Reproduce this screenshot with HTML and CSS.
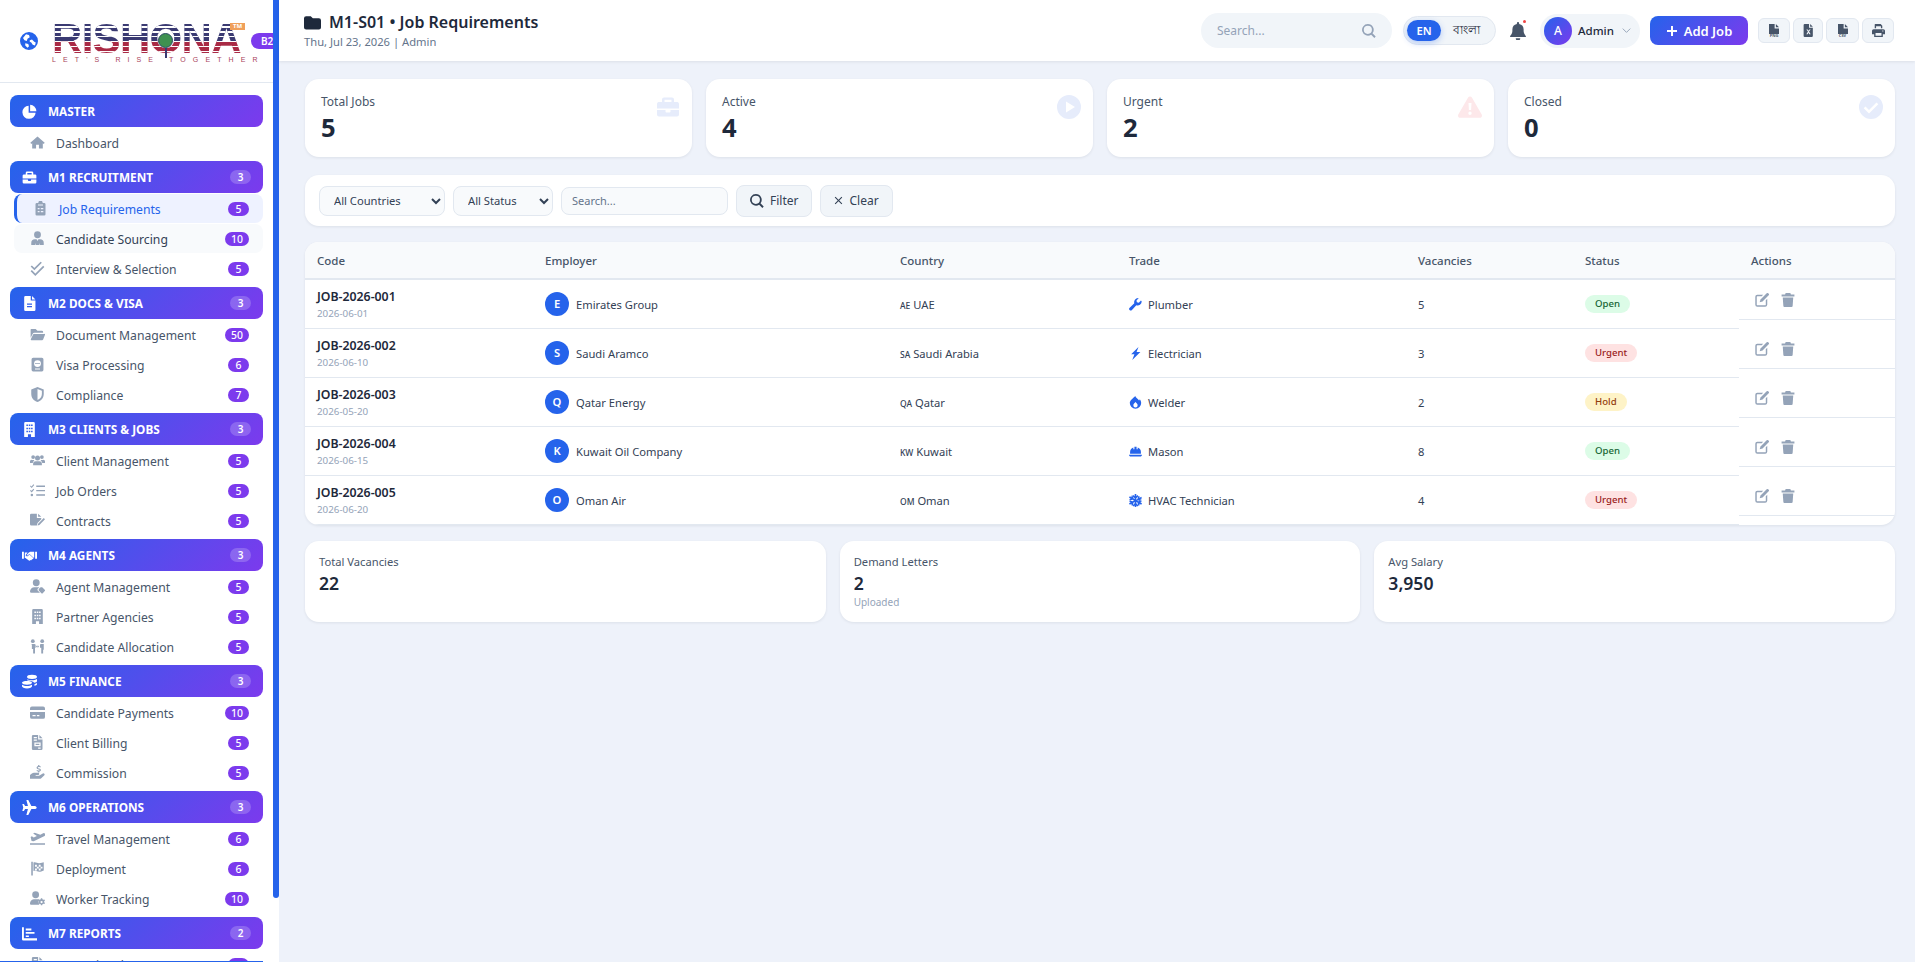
FILE: index.html
```html
<!DOCTYPE html>
<html lang="en">
<head>
    <meta charset="UTF-8">
    <meta name="viewport" content="width=device-width, initial-scale=1.0">
    <title>Job Requirements</title>
    <link rel="stylesheet" href="styles.css">
</head>
<body>
    <svg class="sprite" xmlns="http://www.w3.org/2000/svg">
        <symbol id="i-globe" viewBox="0 0 24 24"><path d="M12 0a12 12 0 1 0 0 24 12 12 0 0 0 0-24zM4 8l4-5 4 1 1 3-3 2-1 3-3-1zm9 3l3-1 3 3 2 1-1 4-3-1-2-3-2-1zM7 15l4 1 1 3-2 2-3-3z"/></symbol>
        <symbol id="i-pie" viewBox="0 0 24 24"><path d="M10.6 2.6v11.3h11.2A10.6 10.6 0 1 1 10.6 2.6z"/><path d="M13 1a10.6 10.6 0 0 1 10 10.4H13z"/></symbol>
        <symbol id="i-home" viewBox="0 0 24 24"><path d="M12 2.5L0.5 12.5l1.5 1.7L3.5 13v8.5h6.2v-6h4.6v6h6.2V13l1.5 1.2 1.5-1.7z"/></symbol>
        <symbol id="i-brief" viewBox="0 0 24 24"><path d="M8 2.5h8a2 2 0 0 1 2 2V7h3.500a2 2 0 0 1 1.500 2v4.500H1V9a2 2 0 0 1 1.500-2H6V4.500a2 2 0 0 1 2-2zm.5 2.200V7h7V4.700z"/><path d="M1 15h8.500v1.500a1 1 0 0 0 1 1h3a1 1 0 0 0 1-1V15H23v4.500a2 2 0 0 1-2 2H3a2 2 0 0 1-2-2z"/></symbol>
        <symbol id="i-clip" viewBox="0 0 24 24"><path d="M6 3h2.500a3.500 3.500 0 0 1 7 0H18a2 2 0 0 1 2 2v16a2 2 0 0 1-2 2H6a2 2 0 0 1-2-2V5a2 2 0 0 1 2-2zm1.500 8v2h3v-2zm5 0v2h4v-2zm-5 5v2h3v-2zm5 0v2h4v-2zM8 5.500v1.500h8V5.500z"/></symbol>
        <symbol id="i-tie" viewBox="0 0 24 24"><circle cx="12" cy="6" r="5.500"/><path d="M10.500 13l1.500 3 1.500-3h2.500a6 6 0 0 1 6 6v3.500H16V19l-1 3.500H9L8 19v3.500H2V19a6 6 0 0 1 6-6z"/></symbol>
        <symbol id="i-checks" viewBox="0 0 24 24"><path d="M2 8l5 5L18 2" fill="none" stroke="currentColor" stroke-width="2.800"/><path d="M2 15.500l6.500 6.500L22 8.500" fill="none" stroke="currentColor" stroke-width="2.800"/></symbol>
        <symbol id="i-doc" viewBox="0 0 24 24"><path d="M5.500 0H14v7h7.500v15a2 2 0 0 1-2 2h-14a2 2 0 0 1-2-2V2a2 2 0 0 1 2-2zM16 0l5.500 5.500H16zM8 12v2h8v-2zm0 4v2h8v-2z"/></symbol>
        <symbol id="i-folder-open" viewBox="0 0 24 24"><path d="M2 3h7l3 3h7a2 2 0 0 1 2 2v1H7a3 3 0 0 0-2.800 2L1 17V4a1 1 0 0 1 1-1z"/><path d="M7 11h16a1 1 0 0 1 1 1.300L21 20a2 2 0 0 1-2 1H2a1 1 0 0 1-.8-1.300L5 12a2 2 0 0 1 2-1z"/></symbol>
        <symbol id="i-passport" viewBox="0 0 24 24"><path d="M5 1h14a2.500 2.500 0 0 1 2.500 2.500v17A2.500 2.500 0 0 1 19 23H5a2.500 2.500 0 0 1-2.500-2.500v-17A2.500 2.500 0 0 1 5 1zm7 4a5.500 5.500 0 1 0 0 11 5.500 5.500 0 0 0 0-11zM8 18.500V20h8v-1.500zM8 10h8v1H8z"/></symbol>
        <symbol id="i-shield" viewBox="0 0 24 24"><path d="M12 0l10 4v7c0 6-4 11-10 13C6 22 2 17 2 11V4zm0 3.200V20.800c4-1.800 7-5.300 7-9.800V6z"/></symbol>
        <symbol id="i-building" viewBox="0 0 24 24"><path d="M5.500 0h13a2 2 0 0 1 2 2v22h-6v-4.500h-5V24h-6V2a2 2 0 0 1 2-2zM7 4v2.500h2.500V4zm3.800 0v2.500h2.500V4zm3.700 0v2.500H17V4zM7 9v2.500h2.500V9zm3.800 0v2.500h2.500V9zm3.700 0v2.500H17V9zM7 14v2.500h2.500V14zm3.800 0v2.500h2.500V14zm3.700 0v2.500H17V14z"/></symbol>
        <symbol id="i-users" viewBox="0 0 24 24"><circle cx="5" cy="6.500" r="3"/><circle cx="19" cy="6.500" r="3"/><circle cx="12" cy="8" r="4"/><path d="M0 15a3 3 0 0 1 3-4h3l1 1c-1.500 1-2.500 2.500-2.500 4H0zM24 15a3 3 0 0 0-3-4h-3l-1 1c1.500 1 2.500 2.500 2.500 4H24zM9 13h6a4 4 0 0 1 4 4v2.500H5V17a4 4 0 0 1 4-4z"/></symbol>
        <symbol id="i-listcheck" viewBox="0 0 24 24"><path d="M10 4h14v2.200H10zM10 11h14v2.200H10zM10 18h14v2.200H10zM1 4l1.500 1.500L5.500 2l1.300 1.200L2.700 8 0 5.200zM1 11l1.500 1.500 3-3.500 1.300 1.200L2.700 15 0 12.200z"/><circle cx="3" cy="19" r="2"/></symbol>
        <symbol id="i-sign" viewBox="0 0 24 24"><path d="M2 1h9v7h7v2l-6 6-1 4H2a2 2 0 0 1-2-2V3a2 2 0 0 1 2-2zM13 1l5 5h-5z"/><path d="M22 8l2 2-9 9-3 1 1-3z"/></symbol>
        <symbol id="i-hands" viewBox="0 0 24 24"><path d="M0 6h3v11H0zM21 6h3v11h-3zM4.500 7H9l-3 4a2 2 0 0 0 3 2l3-2.500 6.500 6-1.500 1.500-1 .1-1 1.400-1.300-.2-1.200 1.200-1.500-.7L5.500 16H4.500z"/><path d="M10.500 7.500L13 6h6.500v9l-1 .5L12 9.500 8 12.500 7.500 11z"/></symbol>
        <symbol id="i-usertag" viewBox="0 0 24 24"><circle cx="10" cy="6" r="5.500"/><path d="M7 13h6a7 7 0 0 1 2 .3L12 16v2l4 4H2a2 2 0 0 1-2-2A7 7 0 0 1 7 13z"/><path d="M14 16l3-3h2.500l4.500 4.500a1 1 0 0 1 0 1.400L20 23a1 1 0 0 1-1.400 0L14 18.500z"/></symbol>
        <symbol id="i-arrows" viewBox="0 0 24 24"><circle cx="4.500" cy="3.500" r="3"/><circle cx="19.500" cy="3.500" r="3"/><path d="M2 8h5a2 2 0 0 1 2 2v4H8v9H5v-7H3v-7zM17 8h5v9h-1v6h-3v-9h-2v-4a2 2 0 0 1 1-2z"/><path d="M9.500 12l2-2v1.500h1V10l2 2-2 2v-1.500h-1V14z"/></symbol>
        <symbol id="i-coins" viewBox="0 0 24 24"><ellipse cx="16" cy="4.500" rx="8" ry="3.500"/><path d="M8.500 8.500c1.500 1 4.500 1.500 7.500 1.500s6-.5 8-2v3c0 1.500-2 2.500-4.500 3C18 12 14 10.500 8.500 10.500z"/><path d="M20 16c2-.5 4-1.500 4-2.500v3c0 1-2 2-4 2.500zM0 14c0-2 3.500-3 8-3s8 1 8 3-3.500 3-8 3-8-1-8-3zM0 17c2 1.500 5 2 8 2s6-.5 8-2v2.500C16 21.500 12.500 23 8 23s-8-1.500-8-3.500z"/></symbol>
        <symbol id="i-card" viewBox="0 0 24 24"><path d="M3 2.500h18a3 3 0 0 1 3 3V8H0V5.500a3 3 0 0 1 3-3zM0 11h24v8a3 3 0 0 1-3 3H3a3 3 0 0 1-3-3zm4 5v2h5v-2zm7 0v2h4v-2z"/></symbol>
        <symbol id="i-invoice" viewBox="0 0 24 24"><path d="M5 0h8v7h7v15a2 2 0 0 1-2 2H5a2 2 0 0 1-2-2V2a2 2 0 0 1 2-2zM15 0l5 5h-5zM6 3v2h5V3zm0 4v2h5V7zm1 5v6h10v-6zm2 2h6v2H9zM13 20v2h4v-2z"/></symbol>
        <symbol id="i-handdollar" viewBox="0 0 24 24"><path d="M13 0h2v1.500c1 .2 2 .6 2.500 1.200L16.300 4c-1-.8-3.800-1-3.800.3 0 1.500 5 .7 5 3.700 0 1.400-1 2.200-2.500 2.500V12h-2v-1.500c-1.200-.2-2.200-.7-2.800-1.400L11.500 8c1.200 1 4 1.300 4 0 0-1.500-5-.7-5-3.700 0-1.400 1-2.400 2.500-2.800z"/><path d="M0 16l3-2.500c1.500-1 3-1.300 4.500-1H13a1.800 1.800 0 0 1 0 3.600H9v1h5.500l6-3.600a2 2 0 0 1 2.500 3l-5 4.500a4 4 0 0 1-2.500 1H0z"/></symbol>
        <symbol id="i-plane" viewBox="0 0 24 24"><path d="M23.500 12c0 1.500-2 2.500-4 2.500h-4.500L10 24H7l2.500-9.500H5L3 17.500H0.500L2 12 0.500 6.500H3L5 9.500h4.500L7 0h3l5 9.500h4.500c2 0 4 1 4 2.500z"/></symbol>
        <symbol id="i-depart" viewBox="0 0 24 24"><path d="M0 19.500h24V22H0zM1 9.500l2-1 3 2 5-2.500-6-4 2.500-1.300 9 3.200 4.500-2.400a2.500 2.500 0 0 1 2.300 4.400L6 16.500 2.500 16z"/></symbol>
        <symbol id="i-flag" viewBox="0 0 24 24"><path d="M2 1h2.500v22H2zM5.500 2.500C9 1 12 4 15 3.500s5-1 7-1.500v13c-3 1.500-5 2-7.500 2s-5.500-2.500-9-1zM8 6v3h3V6zm6 0v3h3V6zM11 9v3h3V9zm6 0v3h3V9zM8 12v3h3v-3zm6 0v3h3v-3z"/></symbol>
        <symbol id="i-usercog" viewBox="0 0 24 24"><circle cx="9" cy="6" r="5.500"/><path d="M6 13h6c1 0 2 .2 2.800.6-1.500 2.400-1.500 5.400 0 8.400H1.500A1.500 1.500 0 0 1 0 20.500 7.500 7.500 0 0 1 6 13z"/><path d="M18.500 11.500h2l.4 1.700 1.400.8 1.700-.5 1 1.700-1.300 1.200v1.600l1.300 1.200-1 1.700-1.700-.5-1.400.8-.4 1.700h-2l-.4-1.700-1.400-.8-1.700.5-1-1.700 1.300-1.200v-1.600l-1.300-1.200 1-1.700 1.700.5 1.400-.8zm1 4.300a1.800 1.800 0 1 0 0 3.600 1.800 1.800 0 0 0 0-3.600z" transform="translate(-1 0)"/></symbol>
        <symbol id="i-chart" viewBox="0 0 24 24"><path d="M0 2h3v17.500h21V23H2a2 2 0 0 1-2-2zM6 4h9v3H6zM6 9.500h14v3H6zM6 15h5v2.500H6z"/></symbol>
        <symbol id="i-folder" viewBox="0 0 24 24"><path d="M3 3h6.500l3 3H21a3 3 0 0 1 3 3v10a3 3 0 0 1-3 3H3a3 3 0 0 1-3-3V6a3 3 0 0 1 3-3z"/></symbol>
        <symbol id="i-search" viewBox="0 0 24 24"><path d="M10 0a10 10 0 0 1 8 16l5.500 5.500-2.300 2.300L15.700 18.300A10 10 0 1 1 10 0zm0 3a7 7 0 1 0 0 14 7 7 0 0 0 0-14z"/></symbol>
        <symbol id="i-bell" viewBox="0 0 24 24"><path d="M10.500 1.500a1.500 1.500 0 0 1 3 0v1.200A7.500 7.500 0 0 1 19.500 10v2c0 2.500 1 4.500 3 6.500v1.500h-21v-1.500c2-2 3-4 3-6.500v-2a7.500 7.500 0 0 1 6-7.300zM9 21.500h6a3 3 0 0 1-6 0z"/></symbol>
        <symbol id="i-chevron" viewBox="0 0 24 24"><path d="M2 7l10 10L22 7" fill="none" stroke="currentColor" stroke-width="2.500"/></symbol>
        <symbol id="i-plus" viewBox="0 0 24 24"><path d="M10 2h4v8h8v4h-8v8h-4v-8H2v-4h8z"/></symbol>
        <symbol id="i-file" viewBox="4 0 16 16"><path d="M4 0h9v7h7v9H4zM15 0l5 5h-5z"/></symbol>
        <symbol id="i-filex" viewBox="0 0 24 24"><path d="M5 0h8v7h7v15a2 2 0 0 1-2 2H5a2 2 0 0 1-2-2V2a2 2 0 0 1 2-2zM15 0l5 5h-5zM8 10l3 4-3 5h2.500l1.500-3 1.500 3H16l-3-5 3-4h-2.500L12 12.500 10.500 10z"/></symbol>
        <symbol id="i-print" viewBox="0 0 24 24"><path d="M6 0h10l3 3v5h-2.500V4H7.500v4H5V1a1 1 0 0 1 1-1zM3 9.500h18a3 3 0 0 1 3 3V19h-4v5H4v-5H0v-6.500a3 3 0 0 1 3-3zM6.500 16.500v5h11v-5zM19 12v2h2v-2z"/></symbol>
        <symbol id="i-xmark" viewBox="0 0 24 24"><path d="M4 2l8 8 8-8 2 2-8 8 8 8-2 2-8-8-8 8-2-2 8-8-8-8z"/></symbol>
        <symbol id="i-play" viewBox="0 0 24 24"><path d="M12 0a12 12 0 1 1 0 24 12 12 0 0 1 0-24zM9 6.500v11L18 12z"/></symbol>
        <symbol id="i-warn" viewBox="0 0 24 24"><path d="M12 1.500c.8 0 1.500.4 1.900 1.100l9.800 17c.8 1.400-.2 3.100-1.800 3.100H2.100C.5 22.700-.5 21 .3 19.600l9.800-17c.4-.7 1.100-1.100 1.900-1.100zM10.500 8l.4 7h2.200l.4-7zM12 16.500a1.700 1.700 0 1 0 0 3.400 1.700 1.700 0 0 0 0-3.400z"/></symbol>
        <symbol id="i-check" viewBox="0 0 24 24"><path d="M12 0a12 12 0 1 1 0 24 12 12 0 0 1 0-24zm5.500 7.500L10 15l-3.500-3.500-1.800 1.800L10 18.500l9.300-9.300z"/></symbol>
        <symbol id="i-wrench" viewBox="0 0 24 24"><path d="M23.500 6.500a7.500 7.500 0 0 1-10 7L5 22.500a3 3 0 0 1-4.200-4.200l9-8.500a7.500 7.500 0 0 1 7-9.600l1 .2-4 4 .7 3.600 3.600.7 4-4z"/></symbol>
        <symbol id="i-bolt" viewBox="0 0 24 24"><path d="M17.500 0L4 13.500h6L6 24l15-15h-7L17.500 0z"/></symbol>
        <symbol id="i-fire" viewBox="0 0 24 24"><path d="M11.500 0c1 3 5 5 7 8.500.8-.8 1.200-1.500 1.500-2.500 1.800 2 2.500 5 2.500 7a10.500 10.500 0 0 1-21 0C1.500 8 7 5 11.500 0zm.5 11c-1.500 2-4 3-4 6a4 4 0 0 0 8 0c0-2.500-2.500-4-4-6z"/></symbol>
        <symbol id="i-helmet" viewBox="0 0 24 24"><path d="M10 3h4v5h2V4.500A9 9 0 0 1 22 13v3H2v-3a9 9 0 0 1 6-8.500V8h2zM0 18h24a3 3 0 0 1-2 3H2a3 3 0 0 1-2-3z"/></symbol>
        <symbol id="i-snow" viewBox="0 0 24 24"><path d="M10.500 0h3v4l2-2 2 2-4 4v2.400l2.100-1.200 1.400-5.400 2.800.7-.7 2.700 3.400-2 1.500 2.600-3.400 2 2.700.7-.7 2.800-5.400-1.500L14.900 12l2.300 1.300 5.400-1.500.7 2.800-2.700.7 3.400 2-1.500 2.600-3.400-2 .7 2.700-2.800.7-1.400-5.400-2.100-1.200V17l4 4-2 2-2-2v3h-3v-3l-2 2-2-2 4-4v-2.300l-2.100 1.200-1.400 5.400-2.800-.7.7-2.700-3.400 2-1.500-2.600 3.400-2-2.700-.7.7-2.800 5.400 1.500L9.100 12 6.800 10.700 1.400 12.200.7 9.400l2.700-.7-3.400-2 1.500-2.600 3.400 2-.7-2.700 2.800-.7 1.400 5.400 2.100 1.200V8l-4-4 2-2 2 2z"/></symbol>
        <symbol id="i-edit" viewBox="0 0 24 24"><path d="M4 3h10l-2.500 2.500H4a1 1 0 0 0-1 1V20a1 1 0 0 0 1 1h13.500a1 1 0 0 0 1-1v-7.500L21 10v10a4 4 0 0 1-3.500 3.500H4A3.500 3.500 0 0 1 .5 20V6.500A3.500 3.500 0 0 1 4 3z"/><path d="M20 .6a2 2 0 0 1 2.800 0l.6.6a2 2 0 0 1 0 2.800L13 14.500l-5 1.500 1.500-5z"/></symbol>
        <symbol id="i-trash" viewBox="0 0 24 24"><path d="M8 0h8l1 2.500h6V6H1V2.500h6zM3 7.500h18L20 22a2 2 0 0 1-2 2H6a2 2 0 0 1-2-2z"/></symbol>
    </svg>

    <div class="sidebar">
        <div class="sidebar-inner">
            <div class="brand">
                <svg class="ic brand-globe"><use href="#i-globe"/></svg>
                <div class="logo">
                    <div class="logo-name">RISHONA</div>
                    <div class="logo-tag">LET'S RISE TOGETHER</div>
                    <span class="logo-mark"><i></i></span>
                    <span class="logo-tm">TM</span>
                </div>
                <span class="brand-pill">B2</span>
            </div>

            <div class="nav">
                <div class="nav-head"><svg class="ic"><use href="#i-pie"/></svg>MASTER</div>
                <a class="nav-item"><svg class="ic"><use href="#i-home"/></svg>Dashboard</a>

                <div class="nav-head"><svg class="ic"><use href="#i-brief"/></svg>M1 RECRUITMENT<span class="head-count">3</span></div>
                <a class="nav-item active"><svg class="ic"><use href="#i-clip"/></svg>Job Requirements<span class="count">5</span></a>
                <a class="nav-item hover"><svg class="ic"><use href="#i-tie"/></svg>Candidate Sourcing<span class="count">10</span></a>
                <a class="nav-item"><svg class="ic"><use href="#i-checks"/></svg>Interview &amp; Selection<span class="count">5</span></a>

                <div class="nav-head"><svg class="ic"><use href="#i-doc"/></svg>M2 DOCS &amp; VISA<span class="head-count">3</span></div>
                <a class="nav-item"><svg class="ic"><use href="#i-folder-open"/></svg>Document Management<span class="count">50</span></a>
                <a class="nav-item"><svg class="ic"><use href="#i-passport"/></svg>Visa Processing<span class="count">6</span></a>
                <a class="nav-item"><svg class="ic"><use href="#i-shield"/></svg>Compliance<span class="count">7</span></a>

                <div class="nav-head"><svg class="ic"><use href="#i-building"/></svg>M3 CLIENTS &amp; JOBS<span class="head-count">3</span></div>
                <a class="nav-item"><svg class="ic"><use href="#i-users"/></svg>Client Management<span class="count">5</span></a>
                <a class="nav-item"><svg class="ic"><use href="#i-listcheck"/></svg>Job Orders<span class="count">5</span></a>
                <a class="nav-item"><svg class="ic"><use href="#i-sign"/></svg>Contracts<span class="count">5</span></a>

                <div class="nav-head"><svg class="ic"><use href="#i-hands"/></svg>M4 AGENTS<span class="head-count">3</span></div>
                <a class="nav-item"><svg class="ic"><use href="#i-usertag"/></svg>Agent Management<span class="count">5</span></a>
                <a class="nav-item"><svg class="ic"><use href="#i-building"/></svg>Partner Agencies<span class="count">5</span></a>
                <a class="nav-item"><svg class="ic"><use href="#i-arrows"/></svg>Candidate Allocation<span class="count">5</span></a>

                <div class="nav-head"><svg class="ic"><use href="#i-coins"/></svg>M5 FINANCE<span class="head-count">3</span></div>
                <a class="nav-item"><svg class="ic"><use href="#i-card"/></svg>Candidate Payments<span class="count">10</span></a>
                <a class="nav-item"><svg class="ic"><use href="#i-invoice"/></svg>Client Billing<span class="count">5</span></a>
                <a class="nav-item"><svg class="ic"><use href="#i-handdollar"/></svg>Commission<span class="count">5</span></a>

                <div class="nav-head"><svg class="ic"><use href="#i-plane"/></svg>M6 OPERATIONS<span class="head-count">3</span></div>
                <a class="nav-item"><svg class="ic"><use href="#i-depart"/></svg>Travel Management<span class="count">6</span></a>
                <a class="nav-item"><svg class="ic"><use href="#i-flag"/></svg>Deployment<span class="count">6</span></a>
                <a class="nav-item"><svg class="ic"><use href="#i-usercog"/></svg>Worker Tracking<span class="count">10</span></a>

                <div class="nav-head"><svg class="ic"><use href="#i-chart"/></svg>M7 REPORTS<span class="head-count">2</span></div>
                <a class="nav-item"><svg class="ic"><use href="#i-invoice"/></svg>Operational Reports<span class="count">5</span></a>
            </div>
            <div class="hbar"></div>
        </div>
        <div class="vbar"><div class="vbar-thumb"></div></div>
    </div>

    <div class="main">
        <div class="topbar">
            <div class="page-title">
                <h1><svg class="ic"><use href="#i-folder"/></svg>M1-S01 • Job Requirements</h1>
                <p>Thu, Jul 23, 2026 | Admin</p>
            </div>
            <div class="top-search">
                <span>Search...</span>
                <svg class="ic"><use href="#i-search"/></svg>
            </div>
            <div class="lang">
                <span class="lang-on">EN</span>
                <span class="lang-off">বাংলা</span>
            </div>
            <div class="bell"><svg class="ic"><use href="#i-bell"/></svg><i></i></div>
            <div class="user">
                <span class="user-avatar">A</span>
                <span>Admin</span>
                <svg class="ic"><use href="#i-chevron"/></svg>
            </div>
            <button class="add-job"><svg class="ic"><use href="#i-plus"/></svg>Add Job</button>
            <div class="exports">
                <button class="w-png"><span class="ftype"><svg class="ic"><use href="#i-file"/></svg><b>PNG</b></span></button>
                <button class="w-xls"><svg class="ic"><use href="#i-filex"/></svg></button>
                <button class="w-csv"><span class="ftype"><svg class="ic"><use href="#i-file"/></svg><b>CSV</b></span></button>
                <button class="w-prn"><svg class="ic"><use href="#i-print"/></svg></button>
            </div>
        </div>

        <div class="content">
            <div class="stats">
                <div class="stat">
                    <div class="stat-label">Total Jobs</div>
                    <div class="stat-value">5</div>
                    <svg class="ic stat-icon blue"><use href="#i-brief"/></svg>
                </div>
                <div class="stat">
                    <div class="stat-label">Active</div>
                    <div class="stat-value">4</div>
                    <svg class="ic stat-icon blue"><use href="#i-play"/></svg>
                </div>
                <div class="stat">
                    <div class="stat-label">Urgent</div>
                    <div class="stat-value">2</div>
                    <svg class="ic stat-icon red"><use href="#i-warn"/></svg>
                </div>
                <div class="stat">
                    <div class="stat-label">Closed</div>
                    <div class="stat-value">0</div>
                    <svg class="ic stat-icon blue"><use href="#i-check"/></svg>
                </div>
            </div>

            <div class="filters">
                <select class="sel-country"><option>All Countries</option></select>
                <select class="sel-status"><option>All Status</option></select>
                <input type="text" placeholder="Search...">
                <button><svg class="ic"><use href="#i-search"/></svg>Filter</button>
                <button><svg class="ic small"><use href="#i-xmark"/></svg>Clear</button>
            </div>

            <div class="table-card">
                <table>
                    <colgroup>
                        <col class="c-code"><col class="c-emp"><col class="c-country"><col class="c-trade"><col class="c-vac"><col class="c-status"><col class="c-act">
                    </colgroup>
                    <thead>
                        <tr><th>Code</th><th>Employer</th><th>Country</th><th>Trade</th><th>Vacancies</th><th>Status</th><th>Actions</th></tr>
                    </thead>
                    <tbody>
                        <tr>
                            <td class="code-cell"><div class="code">JOB-2026-001</div><div class="date">2026-06-01</div></td>
                            <td><div class="emp"><span class="emp-av">E</span>Emirates Group</div></td>
                            <td><span class="cc">AE</span> UAE</td>
                            <td><div class="trade"><svg class="ic"><use href="#i-wrench"/></svg>Plumber</div></td>
                            <td>5</td>
                            <td><span class="pill open">Open</span></td>
                            <td class="actions"><button><svg class="ic"><use href="#i-edit"/></svg></button><button><svg class="ic"><use href="#i-trash"/></svg></button></td>
                        </tr>
                        <tr>
                            <td class="code-cell"><div class="code">JOB-2026-002</div><div class="date">2026-06-10</div></td>
                            <td><div class="emp"><span class="emp-av">S</span>Saudi Aramco</div></td>
                            <td><span class="cc">SA</span> Saudi Arabia</td>
                            <td><div class="trade"><svg class="ic"><use href="#i-bolt"/></svg>Electrician</div></td>
                            <td>3</td>
                            <td><span class="pill urgent">Urgent</span></td>
                            <td class="actions"><button><svg class="ic"><use href="#i-edit"/></svg></button><button><svg class="ic"><use href="#i-trash"/></svg></button></td>
                        </tr>
                        <tr>
                            <td class="code-cell"><div class="code">JOB-2026-003</div><div class="date">2026-05-20</div></td>
                            <td><div class="emp"><span class="emp-av">Q</span>Qatar Energy</div></td>
                            <td><span class="cc">QA</span> Qatar</td>
                            <td><div class="trade"><svg class="ic"><use href="#i-fire"/></svg>Welder</div></td>
                            <td>2</td>
                            <td><span class="pill hold">Hold</span></td>
                            <td class="actions"><button><svg class="ic"><use href="#i-edit"/></svg></button><button><svg class="ic"><use href="#i-trash"/></svg></button></td>
                        </tr>
                        <tr>
                            <td class="code-cell"><div class="code">JOB-2026-004</div><div class="date">2026-06-15</div></td>
                            <td><div class="emp"><span class="emp-av">K</span>Kuwait Oil Company</div></td>
                            <td><span class="cc">KW</span> Kuwait</td>
                            <td><div class="trade"><svg class="ic"><use href="#i-helmet"/></svg>Mason</div></td>
                            <td>8</td>
                            <td><span class="pill open">Open</span></td>
                            <td class="actions"><button><svg class="ic"><use href="#i-edit"/></svg></button><button><svg class="ic"><use href="#i-trash"/></svg></button></td>
                        </tr>
                        <tr>
                            <td class="code-cell"><div class="code">JOB-2026-005</div><div class="date">2026-06-20</div></td>
                            <td><div class="emp"><span class="emp-av">O</span>Oman Air</div></td>
                            <td><span class="cc">OM</span> Oman</td>
                            <td><div class="trade"><svg class="ic"><use href="#i-snow"/></svg>HVAC Technician</div></td>
                            <td>4</td>
                            <td><span class="pill urgent">Urgent</span></td>
                            <td class="actions"><button><svg class="ic"><use href="#i-edit"/></svg></button><button><svg class="ic"><use href="#i-trash"/></svg></button></td>
                        </tr>
                    </tbody>
                </table>
            </div>

            <div class="summary">
                <div class="sum-card">
                    <div class="sum-label">Total Vacancies</div>
                    <div class="sum-value">22</div>
                </div>
                <div class="sum-card">
                    <div class="sum-label">Demand Letters</div>
                    <div class="sum-value">2</div>
                    <div class="sum-note">Uploaded</div>
                </div>
                <div class="sum-card">
                    <div class="sum-label">Avg Salary</div>
                    <div class="sum-value">3,950</div>
                </div>
            </div>
        </div>
    </div>
</body>
</html>
```

FILE: styles.css
```css
* {
    box-sizing: border-box;
}

body {
    margin: 0;
    height: 100vh;
    overflow: hidden;
    display: flex;
    font-family: "Noto Sans", sans-serif;
    font-size: 12px;
    color: #334155;
    background: #eef2fa;
}

.sprite {
    display: none;
}

.ic {
    display: block;
    flex: none;
    width: 14px;
    height: 14px;
    fill: currentColor;
    fill-rule: evenodd;
}

/* sidebar */
.sidebar {
    display: flex;
    flex: none;
    width: 279px;
    height: 100vh;
    background: #fff;
}

.sidebar-inner {
    position: relative;
    width: 273px;
    overflow: hidden;
}

.vbar {
    width: 6px;
}

.vbar-thumb {
    height: 898px;
    background: #2563eb;
    border-radius: 0 0 3px 3px;
}

.hbar {
    position: absolute;
    left: 0;
    bottom: 0;
    width: 263px;
    height: 1px;
    background: #2563eb;
}

.brand {
    display: flex;
    align-items: center;
    height: 83px;
    padding-left: 20px;
    border-bottom: 1px solid #e2e8f0;
}

.brand-globe {
    width: 18px;
    height: 18px;
    color: #2563eb;
    margin-right: 14px;
}

.logo {
    position: relative;
    width: 190px;
    height: 41px;
    margin-top: 4px;
}

.logo-name {
    font-family: "Liberation Sans", Arial, sans-serif;
    font-size: 42px;
    font-weight: 700;
    line-height: 32px;
    height: 31px;
    letter-spacing: -0.7px;
    color: transparent;
    background: repeating-linear-gradient(transparent 0 3.5px, #fff 3.5px 4.8px), linear-gradient(#3a3a72 58%, #a92a45 58%);
    -webkit-background-clip: text;
    background-clip: text;
}

.logo-tag {
    font-family: "Liberation Sans", Arial, sans-serif;
    font-size: 7px;
    line-height: 8px;
    margin-top: 2px;
    letter-spacing: 7.1px;
    white-space: nowrap;
    color: #a9425a;
}

.logo-mark {
    position: absolute;
    left: 106px;
    top: 10px;
    width: 15px;
    height: 15px;
    border-radius: 50%;
    background: #3f9150;
    border: 1px solid #2c4a63;
}

.logo-mark i {
    position: absolute;
    left: 6px;
    top: 14px;
    width: 2px;
    height: 10px;
    background: #3a3a72;
}

.logo-tm {
    position: absolute;
    left: 178px;
    top: 0;
    width: 15px;
    height: 7px;
    font-size: 6px;
    line-height: 7px;
    font-weight: 700;
    text-align: center;
    color: #fff;
    background: #f0a05a;
}

.brand-pill {
    flex: none;
    width: 34px;
    height: 16px;
    margin-left: 9px;
    padding-left: 10px;
    border-radius: 8px;
    background: #7c3aed;
    color: #fff;
    font-size: 10px;
    font-weight: 600;
    line-height: 16px;
}

.nav {
    padding: 12px 10px 0;
}

.nav-head {
    display: flex;
    align-items: center;
    height: 32px;
    margin: 0 0 1px;
    padding: 0 12px;
    border-radius: 8px;
    background: linear-gradient(135deg, #2563eb, #7c3aed);
    color: #fff;
    font-size: 11.8px;
    font-weight: 700;
    white-space: nowrap;
}

.nav-head .ic {
    width: 15px;
    height: 15px;
    margin-right: 11px;
}

.head-count {
    margin-left: auto;
    width: 21px;
    height: 14px;
    border-radius: 7px;
    background: rgba(255, 255, 255, 0.2);
    font-size: 10px;
    font-weight: 600;
    line-height: 14px;
    text-align: center;
}

.nav-item {
    display: flex;
    align-items: center;
    height: 29px;
    margin: 0 0 1px 4px;
    padding: 1px 14px 0 16px;
    border-radius: 8px;
    color: #475569;
    font-size: 12.2px;
    white-space: nowrap;
}

.nav-item:has(+ .nav-head) {
    margin-bottom: 4px;
}

.nav-item .ic {
    width: 15px;
    height: 15px;
    margin-top: -2px;
    margin-right: 11px;
    color: #94a3b8;
}

.nav-item.active {
    background: #eef2ff;
    border-left: 3px solid #2563eb;
    color: #2563eb;
}

.nav-item.hover {
    background: #f8fafc;
    color: #334155;
}

.count {
    margin-left: auto;
    margin-top: -1px;
    min-width: 21px;
    height: 14px;
    padding: 0 6px;
    border-radius: 7px;
    background: #7c3aed;
    color: #fff;
    font-size: 10.4px;
    font-weight: 500;
    line-height: 14px;
    text-align: center;
}

/* top bar */
.main {
    flex: 1;
    min-width: 0;
}

.topbar {
    display: flex;
    align-items: center;
    height: 61px;
    padding: 0 21px 0 25px;
    background: #fff;
    box-shadow: 0 1px 3px rgba(0, 0, 0, 0.08);
}

.page-title {
    flex: 1;
}

.page-title h1 {
    display: flex;
    align-items: center;
    margin: 0;
    font-size: 16px;
    font-weight: 600;
    line-height: 20px;
    color: #1e293b;
}

.page-title h1 .ic {
    width: 17px;
    height: 17px;
    margin-right: 8px;
}

.page-title p {
    margin: 3px 0 0;
    font-size: 11.2px;
    line-height: 14px;
    color: #64748b;
}

.top-search {
    display: flex;
    align-items: center;
    justify-content: space-between;
    width: 191px;
    height: 35px;
    padding: 0 16px;
    border-radius: 18px;
    background: #f1f5f9;
    color: #94a3b8;
    font-size: 12px;
}

.lang {
    display: flex;
    align-items: center;
    width: 93px;
    height: 29px;
    margin-left: 11px;
    padding: 0 3px;
    border: 1px solid #e2e8f0;
    border-radius: 15px;
    background: #f1f5f9;
    font-size: 12px;
}

.lang-on {
    width: 34px;
    height: 21px;
    border-radius: 11px;
    background: #2563eb;
    box-shadow: 0 2px 6px rgba(37, 99, 235, 0.3);
    color: #fff;
    font-size: 11.2px;
    font-weight: 600;
    line-height: 21px;
    text-align: center;
}

.lang-off {
    flex: 1;
    text-align: center;
    color: #1e293b;
    font-weight: 500;
}

.bell {
    position: relative;
    margin-left: 13px;
    color: #475569;
}

.bell .ic {
    width: 18px;
    height: 18px;
}

.bell i {
    position: absolute;
    top: -2px;
    right: 1px;
    width: 3px;
    height: 3px;
    border-radius: 50%;
    background: #ef4444;
}

.user {
    display: flex;
    align-items: center;
    width: 100px;
    height: 34px;
    margin-left: 13px;
    padding: 0 10px 0 4px;
    border-radius: 17px;
    background: #f1f5f9;
    color: #1e293b;
    font-size: 11.5px;
    font-weight: 500;
}

.user-avatar {
    flex: none;
    width: 28px;
    height: 28px;
    margin-right: 6px;
    border-radius: 50%;
    background: linear-gradient(135deg, #2563eb, #7c3aed);
    color: #fff;
    font-size: 12px;
    line-height: 28px;
    text-align: center;
}

.user .ic {
    width: 9px;
    height: 9px;
    margin-left: 8px;
    color: #94a3b8;
}

.add-job {
    display: flex;
    align-items: center;
    justify-content: center;
    gap: 6px;
    width: 98px;
    height: 29px;
    margin-left: 10px;
    border: none;
    border-radius: 8px;
    background: linear-gradient(135deg, #2563eb, #7c3aed);
    color: #fff;
    font-family: inherit;
    font-size: 13px;
    font-weight: 600;
}

.add-job .ic {
    width: 12px;
    height: 12px;
}

.exports {
    display: flex;
    gap: 3px;
    margin-left: 10px;
}

.exports button {
    display: flex;
    align-items: center;
    justify-content: center;
    height: 25px;
    padding: 0;
    border: 1px solid #e2e8f0;
    border-radius: 6px;
    background: #f1f5f9;
    color: #475569;
    font-family: inherit;
}

.exports .ic {
    width: 13px;
    height: 13px;
}

.w-png {
    width: 32px;
}

.w-xls {
    width: 30px;
}

.w-csv {
    width: 33px;
}

.w-prn {
    width: 32px;
}

.ftype {
    display: flex;
    flex-direction: column;
    align-items: center;
    width: 14px;
}

.exports .ftype .ic {
    width: 10px;
    height: 10px;
}

.ftype b {
    font-size: 4px;
    line-height: 4px;
}

/* content */
.content {
    padding: 18px 20px 0 26px;
}

.stats {
    display: grid;
    grid-template-columns: repeat(4, 1fr);
    gap: 14px;
}

.stat {
    position: relative;
    height: 78px;
    padding: 15px 16px;
    border-radius: 14px;
    background: #fff;
    box-shadow: 0 1px 3px rgba(15, 23, 42, 0.08);
}

.stat-label {
    font-size: 12px;
    line-height: 16px;
    color: #475569;
}

.stat-value {
    margin-top: 3px;
    font-size: 25.6px;
    font-weight: 700;
    line-height: 30px;
    color: #1e293b;
}

.stat-icon {
    position: absolute;
    top: 16px;
    right: 12px;
    width: 24px;
    height: 24px;
}

.stat-icon.blue {
    color: #e6ecfb;
}

.stat-icon.red {
    color: #fde8ea;
}

.filters {
    display: flex;
    align-items: center;
    gap: 8px;
    height: 51px;
    margin-top: 18px;
    padding: 0 14px;
    border-radius: 14px;
    background: #fff;
    box-shadow: 0 1px 3px rgba(15, 23, 42, 0.08);
}

.filters select,
.filters input {
    height: 30px;
    border: 1px solid #e2e8f0;
    border-radius: 8px;
    background-color: #f8fafc;
    color: #334155;
    font-family: inherit;
    font-size: 11.2px;
}

.filters select {
    padding: 0 10px;
}

.sel-country {
    width: 126px;
}

.sel-status {
    width: 100px;
}

.filters input {
    width: 167px;
    height: 28px;
    padding: 0 10px;
    font-size: 11px;
}

.filters input::placeholder {
    color: #64748b;
}

.filters button {
    display: flex;
    align-items: center;
    gap: 6px;
    height: 32px;
    padding: 0 13px;
    border: 1px solid #e2e8f0;
    border-radius: 8px;
    background: #f1f5f9;
    color: #334155;
    font-family: inherit;
    font-size: 12px;
}

.filters .ic.small {
    width: 9px;
    height: 9px;
}

.table-card {
    margin-top: 16px;
    border-radius: 14px;
    overflow: hidden;
    background: #fff;
    box-shadow: 0 1px 3px rgba(15, 23, 42, 0.08);
}

table {
    width: 100%;
    table-layout: fixed;
    border-collapse: separate;
    border-spacing: 0;
}

.c-code { width: 228px; }
.c-emp { width: 355px; }
.c-country { width: 229px; }
.c-trade { width: 289px; }
.c-vac { width: 167px; }
.c-status { width: 166px; }
.c-act { width: 156px; }

th {
    height: 38px;
    padding: 0 12px;
    border-bottom: 2px solid #e2e8f0;
    background: #f8fafc;
    color: #475569;
    font-size: 11.5px;
    font-weight: 500;
    text-align: left;
}

td {
    padding: 9px 12px;
    border-bottom: 1px solid #e2e8f0;
    color: #334155;
    font-size: 11.2px;
    vertical-align: middle;
}

td.code-cell {
    padding: 10px 12px 8px;
}

.code {
    font-size: 12.3px;
    font-weight: 600;
    line-height: 14px;
    color: #1e293b;
}

.date {
    margin-top: 3px;
    font-size: 9.8px;
    line-height: 13px;
    color: #94a3b8;
}

.emp,
.trade {
    display: flex;
    align-items: center;
}

.emp-av {
    flex: none;
    width: 24px;
    height: 24px;
    margin-right: 7px;
    border-radius: 50%;
    background: #2563eb;
    color: #fff;
    font-size: 11.2px;
    font-weight: 600;
    line-height: 24px;
    text-align: center;
}

.cc {
    font-size: 8.5px;
    font-weight: 500;
}

.trade .ic {
    width: 13px;
    height: 13px;
    margin-right: 6px;
    color: #2563eb;
}

.pill {
    display: inline-block;
    height: 18px;
    padding: 0 10px;
    border-radius: 9px;
    font-size: 9.6px;
    font-weight: 500;
    line-height: 18px;
}

.open { background: #dcfce7; color: #166534; }
.urgent { background: #fee2e2; color: #991b1b; }
.hold { background: #fef3c7; color: #92400e; }

td.actions {
    display: flex;
    align-items: center;
    gap: 4px;
    height: 40px;
    padding: 0 12px;
}

.actions button {
    padding: 0 4px;
    border: none;
    background: none;
    color: #94a3b8;
}

.actions .ic {
    width: 14px;
    height: 14px;
}

.summary {
    display: grid;
    grid-template-columns: repeat(3, 1fr);
    gap: 14px;
    margin-top: 16px;
}

.sum-card {
    height: 81px;
    padding: 14px;
    border-radius: 14px;
    background: #fff;
    box-shadow: 0 1px 3px rgba(15, 23, 42, 0.08);
}

.sum-label {
    font-size: 11.2px;
    line-height: 14px;
    color: #475569;
}

.sum-value {
    margin-top: 3px;
    font-size: 17.6px;
    font-weight: 600;
    line-height: 22px;
    color: #1e293b;
}

.sum-note {
    margin-top: 2px;
    font-size: 10px;
    line-height: 13px;
    color: #94a3b8;
}
```
